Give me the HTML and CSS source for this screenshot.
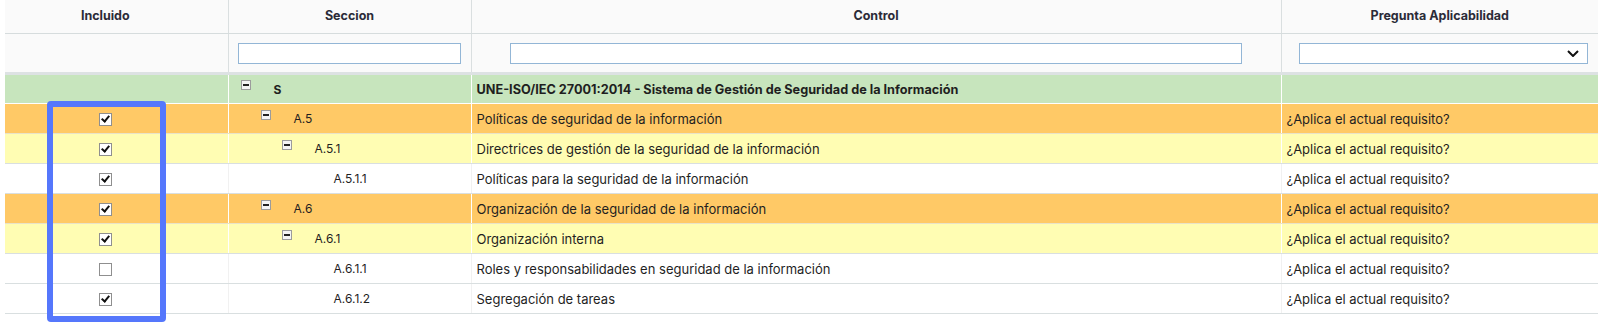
FILE: index.html
```html
<!DOCTYPE html>
<html lang="es">
<head>
  <meta charset="UTF-8" />
  <meta name="viewport" content="width=device-width, initial-scale=1.0"/>
  <title>Aplicabilidad - Controles</title>
  <link rel="stylesheet" href="styles.css">
</head>
<body>
  <div class="grid-wrap">
    <table class="grid">
      <colgroup>
        <col class="w-inc">
        <col class="w-sec">
        <col class="w-ctl">
        <col class="w-preg">
      </colgroup>
      <thead>
        <tr class="head">
          <th class="col-inc">Incluido</th>
          <th>Seccion</th>
          <th>Control</th>
          <th>Pregunta Aplicabilidad</th>
        </tr>
        <tr class="filters">
          <td></td>
          <td class="f-sec"><input type="text"></td>
          <td class="f-ctl"><input type="text"></td>
          <td class="f-preg">
            <div class="select-wrap">
              <select><option></option></select>
              <svg class="chevron" width="12" height="7" viewBox="0 0 12 7"><path d="M1 1 L6 6 L11 1" fill="none" stroke="#111" stroke-width="2"/></svg>
            </div>
          </td>
        </tr>
      </thead>
      <tbody>
        <tr class="row-root">
          <td class="col-inc"></td>
          <td><div class="tree lvl-0"><span class="toggle"></span><span class="code">S</span></div></td>
          <td class="ctl">UNE-ISO/IEC 27001:2014 - Sistema de Gestión de Seguridad de la Información</td>
          <td></td>
        </tr>
        <tr class="row-dom">
          <td class="col-inc"><span class="check on"></span></td>
          <td><div class="tree lvl-1"><span class="toggle"></span><span class="code">A.5</span></div></td>
          <td class="ctl">Políticas de seguridad de la información</td>
          <td class="preg">¿Aplica el actual requisito?</td>
        </tr>
        <tr class="row-obj">
          <td class="col-inc"><span class="check on"></span></td>
          <td><div class="tree lvl-2"><span class="toggle"></span><span class="code">A.5.1</span></div></td>
          <td class="ctl">Directrices de gestión de la seguridad de la información</td>
          <td class="preg">¿Aplica el actual requisito?</td>
        </tr>
        <tr class="row-leaf">
          <td class="col-inc"><span class="check on"></span></td>
          <td><div class="tree lvl-3"><span class="toggle blank"></span><span class="code">A.5.1.1</span></div></td>
          <td class="ctl">Políticas para la seguridad de la información</td>
          <td class="preg">¿Aplica el actual requisito?</td>
        </tr>
        <tr class="row-dom">
          <td class="col-inc"><span class="check on"></span></td>
          <td><div class="tree lvl-1"><span class="toggle"></span><span class="code">A.6</span></div></td>
          <td class="ctl">Organización de la seguridad de la información</td>
          <td class="preg">¿Aplica el actual requisito?</td>
        </tr>
        <tr class="row-obj">
          <td class="col-inc"><span class="check on"></span></td>
          <td><div class="tree lvl-2"><span class="toggle"></span><span class="code">A.6.1</span></div></td>
          <td class="ctl">Organización interna</td>
          <td class="preg">¿Aplica el actual requisito?</td>
        </tr>
        <tr class="row-leaf">
          <td class="col-inc"><span class="check"></span></td>
          <td><div class="tree lvl-3"><span class="toggle blank"></span><span class="code">A.6.1.1</span></div></td>
          <td class="ctl">Roles y responsabilidades en seguridad de la información</td>
          <td class="preg">¿Aplica el actual requisito?</td>
        </tr>
        <tr class="row-leaf">
          <td class="col-inc"><span class="check on"></span></td>
          <td><div class="tree lvl-3"><span class="toggle blank"></span><span class="code">A.6.1.2</span></div></td>
          <td class="ctl">Segregación de tareas</td>
          <td class="preg">¿Aplica el actual requisito?</td>
        </tr>
      </tbody>
    </table>
    <div class="highlight"></div>
  </div>
</body>
</html>
```

FILE: styles.css
```css
body {
  margin: 0;
  padding: 0 0 0 5px;
  background: #fff;
  font-family: Inter, "Open Sans", sans-serif;
  font-size: 13px;
  color: #1f1f1f;
}
.grid-wrap {
  position: relative;
  height: 322px;
}
.grid {
  width: 1593px;
  border-collapse: collapse;
  table-layout: fixed;
}
.w-inc { width: 223px; }
.w-sec { width: 243px; }
.w-ctl { width: 810px; }
.w-preg { width: 317px; }

.head th {
  height: 31px;
  background: #fafafa;
  border-right: 1px solid #dadfe0;
  border-bottom: 1px solid #d6dcdd;
  font-weight: 700;
  font-size: 12.5px;
  color: #2b2b38;
  text-align: center;
  padding: 0 0 2px;
}
.head th:last-child { border-right: none; }
.head th.col-inc { padding-right: 22px; }

.filters td {
  height: 38px;
  background: #fafafa;
  border-right: 1px solid #dadfe0;
  border-bottom: 3px solid #dde2e3;
  padding: 0;
}
.filters td:last-child { border-right: none; }
.filters input,
.filters select {
  display: block;
  box-sizing: border-box;
  width: 100%;
  height: 21px;
  border: 1px solid #93b6d6;
  background: #fff;
  margin: 0;
  padding: 0 4px;
  font: inherit;
  outline: none;
  border-radius: 0;
}
.f-sec { padding: 0 10px 0 9px !important; }
.f-ctl { padding: 0 39px 0 38px !important; }
.f-preg { padding: 0 10px 0 17px !important; }
.select-wrap {
  position: relative;
}
.select-wrap select {
  appearance: none;
  -webkit-appearance: none;
}
.chevron {
  position: absolute;
  right: 9px;
  top: 7px;
  pointer-events: none;
}

tbody tr td {
  height: 29px;
  padding: 0 5px;
  border-right: 1px solid #fff;
  border-bottom: 1px solid #d9dfe0;
  white-space: nowrap;
}
tbody tr td:last-child { border-right: none; }
tbody td.col-inc {
  text-align: center;
  padding: 0 22px 0 0;
}
.row-root td {
  background: #c7e5bd;
  font-weight: 700;
  font-size: 12.7px;
  border-bottom-color: #fff;
  height: 28px;
}
.row-dom td { background: #ffc966; border-bottom-color: #e9e3c8; }
.row-obj td { background: #fffdb3; border-bottom-color: #d9dfe0; }
.row-leaf td { background: #fff; border-right-color: #f1f1f1; }
tbody td.preg { padding-left: 5px; }

.tree {
  display: flex;
  align-items: center;
  height: 28px;
  margin-left: 7px;
}
.lvl-1 { padding-left: 20px; }
.lvl-2 { padding-left: 41px; }
.lvl-3 { padding-left: 60px; }
.toggle {
  position: relative;
  align-self: flex-start;
  margin-top: 5px;
  width: 8px;
  height: 8px;
  border: 1px solid #9c9c9c;
  background: #f4f4f4;
  flex-shrink: 0;
}
.toggle::after {
  content: "";
  position: absolute;
  left: 1px;
  top: 3px;
  width: 6px;
  height: 2px;
  background: #222;
}
.toggle.blank {
  visibility: hidden;
}
.code {
  margin-left: 23px;
  font-size: 12px;
}
.lvl-0 .code { font-weight: 700; }

.check {
  display: inline-block;
  position: relative;
  box-sizing: border-box;
  width: 13px;
  height: 13px;
  border: 1px solid #8f8f8f;
  background: #fff;
  vertical-align: middle;
}
.check.on::after {
  content: "";
  position: absolute;
  left: 3px;
  top: 0px;
  width: 3px;
  height: 6px;
  border: solid #111;
  border-width: 0 2px 2px 0;
  transform: rotate(40deg);
}

.highlight {
  position: absolute;
  left: 42px;
  top: 101px;
  width: 107px;
  height: 209px;
  border: 6px solid #5577fc;
  border-radius: 4px;
  pointer-events: none;
}
```
